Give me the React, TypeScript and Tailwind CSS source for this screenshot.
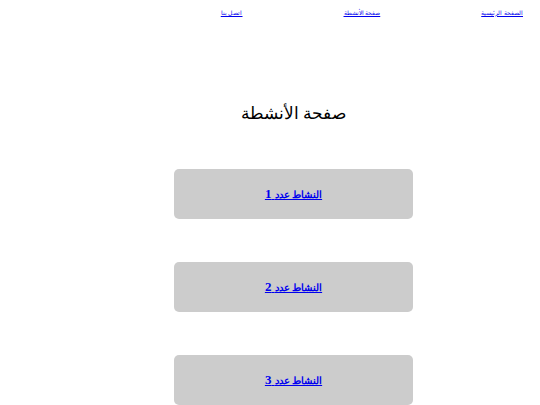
import React from 'react';

const activities = [1, 2, 3];

const App: React.FC = () => {
  return (
    <div dir="rtl" className="min-h-[405px] bg-white font-['Liberation_Sans',sans-serif]">
      <nav className="flex gap-[101px] pr-[17px] pt-[8px] text-[6.3px] leading-[10px]">
        <a href="#" className="text-[#0000ee] underline">الصفحة الرئيسية</a>
        <a href="#" className="text-[#0000ee] underline">صفحة الأنشطة</a>
        <a href="#" className="text-[#0000ee] underline">اتصل بنا</a>
      </nav>

      <main className="pl-[47px]">
        <h1 className="mt-[84px] text-center text-[17px] leading-[24px] text-black">صفحة الأنشطة</h1>

        <div className="mt-[43px] flex flex-col items-center gap-[43px]">
          {activities.map((n) => (
            <div
              key={n}
              className="flex h-[50px] w-[239px] items-center justify-center rounded-[5px] bg-[#cccccc]"
            >
              <a
                href="#"
                className="font-['Liberation_Serif',serif] text-[13px] font-bold text-[#0000ee] underline"
              >
                <span className="text-[10px]">النشاط عدد</span> {n}
              </a>
            </div>
          ))}
        </div>
      </main>
    </div>
  );
};

export default App;
